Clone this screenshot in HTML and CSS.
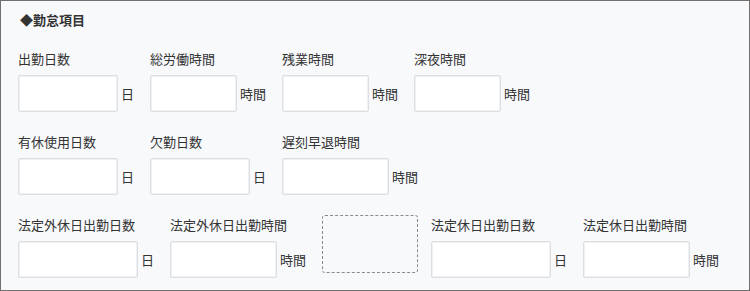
FILE: index.html
```html
<!DOCTYPE html>
<html lang="ja">
<head>
    <meta charset="utf-8">
    <title>勤怠項目</title>
    <link rel="stylesheet" href="styles.css">
</head>
<body>

<div class="panel">
    <div class="panelTitle">◆勤怠項目</div>

    <div class="fieldRow">
        <div class="field">
            <label class="fieldLabel">出勤日数</label>
            <div class="fieldInput"><input type="text"><span class="unit">日</span></div>
        </div>
        <div class="field">
            <label class="fieldLabel">総労働時間</label>
            <div class="fieldInput"><input type="text"><span class="unit">時間</span></div>
        </div>
        <div class="field">
            <label class="fieldLabel">残業時間</label>
            <div class="fieldInput"><input type="text"><span class="unit">時間</span></div>
        </div>
        <div class="field">
            <label class="fieldLabel">深夜時間</label>
            <div class="fieldInput"><input type="text"><span class="unit">時間</span></div>
        </div>
    </div>

    <div class="fieldRow">
        <div class="field">
            <label class="fieldLabel">有休使用日数</label>
            <div class="fieldInput"><input type="text"><span class="unit">日</span></div>
        </div>
        <div class="field">
            <label class="fieldLabel">欠勤日数</label>
            <div class="fieldInput"><input type="text"><span class="unit">日</span></div>
        </div>
        <div class="field wide">
            <label class="fieldLabel">遅刻早退時間</label>
            <div class="fieldInput"><input type="text"><span class="unit">時間</span></div>
        </div>
    </div>

    <div class="fieldRow">
        <div class="field wide">
            <label class="fieldLabel">法定外休日出勤日数</label>
            <div class="fieldInput"><input type="text"><span class="unit">日</span></div>
        </div>
        <div class="field wide">
            <label class="fieldLabel">法定外休日出勤時間</label>
            <div class="fieldInput"><input type="text"><span class="unit">時間</span></div>
        </div>
        <div class="dropSlot"></div>
        <div class="field wide">
            <label class="fieldLabel">法定休日出勤日数</label>
            <div class="fieldInput"><input type="text"><span class="unit">日</span></div>
        </div>
        <div class="field wide">
            <label class="fieldLabel">法定休日出勤時間</label>
            <div class="fieldInput"><input type="text"><span class="unit">時間</span></div>
        </div>
    </div>
</div>

</body>
</html>
```

FILE: styles.css
```css
body {
    margin: 0;
    font-family: "Noto Sans CJK JP", "Noto Sans", sans-serif;
    font-size: 13px;
    color: #333;
}

.panel {
    width: 750px;
    height: 291px;
    box-sizing: border-box;
    border: 1px solid #707070;
    background-color: #f8f9fb;
    padding: 9px 17px 0 17px;
}

.panelTitle {
    font-weight: bold;
    line-height: 19px;
    padding-left: 2px;
    margin-bottom: 20px;
}

.fieldRow {
    display: flex;
    align-items: flex-start;
    gap: 16px;
    margin-bottom: 20px;
}

.field {
    width: 116px;
    display: flex;
    flex-direction: column;
}

.field.wide {
    width: 136px;
}

.fieldLabel {
    line-height: 19px;
    margin-bottom: 7px;
    white-space: nowrap;
}

.fieldInput {
    display: flex;
    align-items: center;
}

.fieldInput input {
    flex: 1;
    min-width: 0;
    height: 37px;
    box-sizing: border-box;
    border: 1px solid #dcdee2;
    border-radius: 2px;
    box-shadow: inset 0 0 0 1px #f0f1f2;
    background-color: #fff;
    margin: 0;
    padding: 0 6px;
    font-family: inherit;
    font-size: 13px;
}

.unit {
    margin-left: 3px;
    white-space: nowrap;
}

.dropSlot {
    width: 96px;
    height: 58px;
    box-sizing: border-box;
    border: 1px dashed #8a8a8a;
    border-radius: 3px;
    margin-right: -3px;
}
```
